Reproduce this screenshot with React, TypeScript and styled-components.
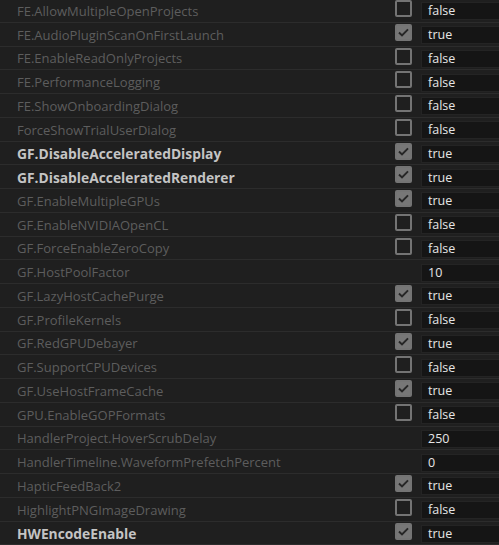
import styled, { createGlobalStyle } from "styled-components";

type Setting = {
  name: string;
  value: string;
  flag?: boolean;
  bold?: boolean;
};

const settings: Setting[] = [
  { name: "FE.AllowMultipleOpenProjects", value: "false", flag: false },
  { name: "FE.AudioPluginScanOnFirstLaunch", value: "true", flag: true },
  { name: "FE.EnableReadOnlyProjects", value: "false", flag: false },
  { name: "FE.PerformanceLogging", value: "false", flag: false },
  { name: "FE.ShowOnboardingDialog", value: "false", flag: false },
  { name: "ForceShowTrialUserDialog", value: "false", flag: false },
  { name: "GF.DisableAcceleratedDisplay", value: "true", flag: true, bold: true },
  { name: "GF.DisableAcceleratedRenderer", value: "true", flag: true, bold: true },
  { name: "GF.EnableMultipleGPUs", value: "true", flag: true },
  { name: "GF.EnableNVIDIAOpenCL", value: "false", flag: false },
  { name: "GF.ForceEnableZeroCopy", value: "false", flag: false },
  { name: "GF.HostPoolFactor", value: "10" },
  { name: "GF.LazyHostCachePurge", value: "true", flag: true },
  { name: "GF.ProfileKernels", value: "false", flag: false },
  { name: "GF.RedGPUDebayer", value: "true", flag: true },
  { name: "GF.SupportCPUDevices", value: "false", flag: false },
  { name: "GF.UseHostFrameCache", value: "true", flag: true },
  { name: "GPU.EnableGOPFormats", value: "false", flag: false },
  { name: "HandlerProject.HoverScrubDelay", value: "250" },
  { name: "HandlerTimeline.WaveformPrefetchPercent", value: "0" },
  { name: "HapticFeedBack2", value: "true", flag: true },
  { name: "HighlightPNGImageDrawing", value: "false", flag: false },
  { name: "HWEncodeEnable", value: "true", flag: true, bold: true },
];

const GlobalStyle = createGlobalStyle`
  html, body {
    margin: 0;
    padding: 0;
    background: #1f1f1f;
    overflow: hidden;
  }
`;

const Page = styled.div`
  width: 499px;
  height: 545px;
  overflow: hidden;
  background: #1f1f1f;
  font-family: "Open Sans", "Noto Sans", sans-serif;
  font-size: 13px;
`;

const List = styled.div`
  margin-top: -1px;
  display: flex;
  flex-direction: column;
`;

const Row = styled.div`
  height: 23.75px;
  box-sizing: border-box;
  border-bottom: 1px solid #2c2c2c;
  display: grid;
  grid-template-columns: 1fr 26px 78px;
  align-items: center;
  overflow: hidden;
`;

const Label = styled.div<{ $bold?: boolean }>`
  padding-left: 17px;
  padding-top: 1px;
  white-space: nowrap;
  overflow: hidden;
  color: ${(p) => (p.$bold ? "#c4c4c4" : "#5d5d5d")};
  font-weight: ${(p) => (p.$bold ? 700 : 400)};
  font-size: ${(p) => (p.$bold ? "13.8px" : "13px")};
`;

const CheckCell = styled.div`
  align-self: start;
  padding-top: 1px;
`;

const Box = styled.div<{ $on: boolean }>`
  width: 17px;
  height: 17px;
  box-sizing: border-box;
  border: 2px solid #747474;
  border-radius: 2px;
  background: ${(p) => (p.$on ? "#777777" : "transparent")};
  display: flex;
  align-items: center;
  justify-content: center;
`;

const Field = styled.div`
  width: 96px;
  height: 18px;
  margin-top: 2px;
  box-sizing: border-box;
  padding-left: 6px;
  background: #151515;
  border: 1px solid #242424;
  border-right: none;
  color: #e6e6e6;
  font-size: 12.5px;
  line-height: 16px;
  white-space: nowrap;
`;

function Check({ on }: { on: boolean }) {
  return (
    <Box $on={on}>
      {on && (
        <svg width="11" height="9" viewBox="0 0 11 9">
          <path d="M1 4.6 L4 7.4 L10 1.4" fill="none" stroke="#262626" strokeWidth="2" />
        </svg>
      )}
    </Box>
  );
}

export default function App() {
  return (
    <Page>
      <GlobalStyle />
      <List>
        {settings.map((s) => (
          <Row key={s.name}>
            <Label $bold={s.bold}>{s.name}</Label>
            <CheckCell>{s.flag !== undefined && <Check on={s.flag} />}</CheckCell>
            <Field>{s.value}</Field>
          </Row>
        ))}
      </List>
    </Page>
  );
}
